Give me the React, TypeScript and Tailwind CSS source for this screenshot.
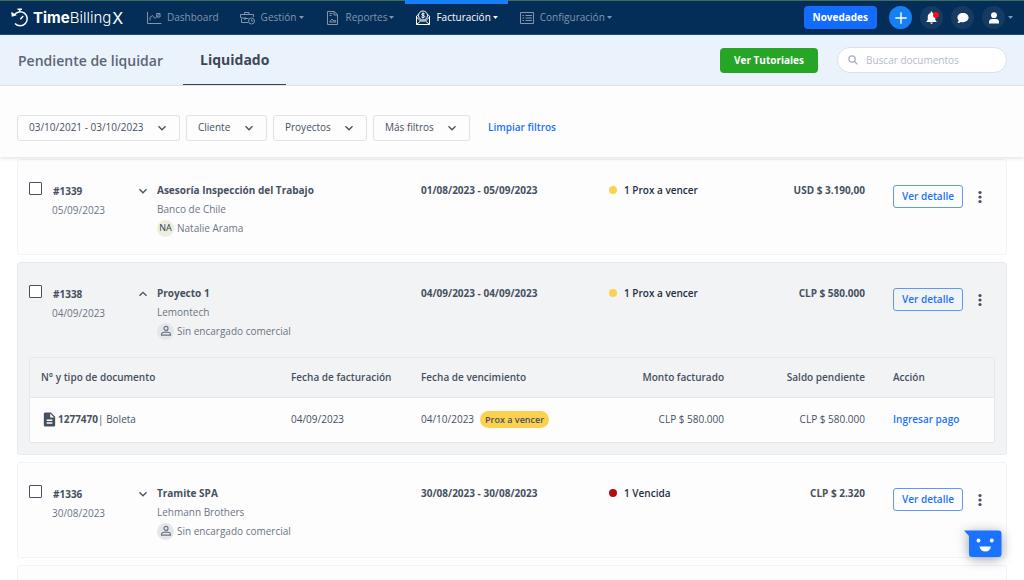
import type { ReactNode } from "react"
import clsx from "clsx"

type Doc = {
  number: string
  kind: string
  billed: string
  due: string
  status: string
  amount: string
  pending: string
}

type Settlement = {
  id: string
  date: string
  project: string
  client: string
  initials?: string
  manager?: string
  period: string
  status: string
  overdue?: boolean
  amount: string
  docs?: Doc[]
}

const settlements: Settlement[] = [
  {
    id: "#1339",
    date: "05/09/2023",
    project: "Asesoría Inspección del Trabajo",
    client: "Banco de Chile",
    initials: "NA",
    manager: "Natalie Arama",
    period: "01/08/2023 - 05/09/2023",
    status: "1 Prox a vencer",
    amount: "USD $ 3.190,00",
  },
  {
    id: "#1338",
    date: "04/09/2023",
    project: "Proyecto 1",
    client: "Lemontech",
    period: "04/09/2023 - 04/09/2023",
    status: "1 Prox a vencer",
    amount: "CLP $ 580.000",
    docs: [
      {
        number: "1277470",
        kind: "Boleta",
        billed: "04/09/2023",
        due: "04/10/2023",
        status: "Prox a vencer",
        amount: "CLP $ 580.000",
        pending: "CLP $ 580.000",
      },
    ],
  },
  {
    id: "#1336",
    date: "30/08/2023",
    project: "Tramite SPA",
    client: "Lehmann Brothers",
    period: "30/08/2023 - 30/08/2023",
    status: "1 Vencida",
    overdue: true,
    amount: "CLP $ 2.320",
  },
]

const filters = ["03/10/2021 - 03/10/2023", "Cliente", "Proyectos", "Más filtros"]

function Line({ children, className = "size-4" }: { children: ReactNode; className?: string }) {
  return (
    <svg viewBox="0 0 16 16" fill="none" stroke="currentColor" strokeWidth="1" className={clsx("shrink-0", className)} aria-hidden="true">
      {children}
    </svg>
  )
}

const navItems = [
  {
    label: "Dashboard",
    icon: (
      <Line>
        <path d="M1.500 2v11.500h14M4 10.500v-3l2.500-2 2.500 3 4.500-4.500M10.500 3.500h3.500V7h-3z" />
      </Line>
    ),
  },
  {
    label: "Gestión",
    menu: true,
    icon: (
      <Line>
        <path d="M8 12.500H1.500v-4M.5 4.500h13V7M.5 4.500v3l4 1h4M4.500 4.500v-2H9v2M5 7v3" />
        <circle cx="11.500" cy="11" r="3" />
        <path d="M11.500 9.500V11H13" />
      </Line>
    ),
  },
  {
    label: "Reportes",
    menu: true,
    icon: (
      <Line>
        <path d="M2.500 1.500H9l3.500 3v10h-10zM9 1.500V5h3.500M4.500 3.500h3M4.500 5.500h2M4.500 12l2.500-3 1.500 2L10 10l1 2z" />
      </Line>
    ),
  },
  {
    label: "Facturación",
    menu: true,
    active: true,
    icon: (
      <Line>
        <path d="M1.500 6v8.500h13V6M1.500 7l4 4h5l4-4M1.500 14.500l4-3.500M14.500 14.500l-4-3.500M1.500 6l2-1.500M14.500 6l-2-1.500" />
        <circle cx="8" cy="5.500" r="4.500" />
        <path d="M9.700 4c-.5-.6-3-.8-3 .5s3 .6 3 2-2.700 1.200-3.300.4M8 2.500v6" />
      </Line>
    ),
  },
  {
    label: "Configuración",
    menu: true,
    icon: (
      <Line>
        <path d="M1.500 2.500h13v11h-13zM6.500 5.500H13M6.500 8H13M6.500 10.500H13M3.500 5.500H5M3.500 8H5M3.500 10.500H5" />
      </Line>
    ),
  },
]

function Caret() {
  return (
    <svg viewBox="0 0 5 3" className="h-[3px] w-[5px] shrink-0 fill-current" aria-hidden="true">
      <path d="M0 0h5L2.500 3z" />
    </svg>
  )
}

function Chevron({ up, className }: { up?: boolean; className?: string }) {
  return (
    <svg viewBox="0 0 10 10" fill="none" stroke="currentColor" strokeWidth="1.300" className={clsx("size-2.5", className)} aria-hidden="true">
      <path d={up ? "M1.500 6.800 5 3.300l3.500 3.500" : "M1.500 3.300 5 6.800l3.500-3.500"} />
    </svg>
  )
}

function Logo() {
  return (
    <a href="#" className="flex w-[125px] shrink-0 items-center gap-1 text-white">
      <svg viewBox="0 0 18 20" fill="none" stroke="currentColor" strokeWidth="1.500" className="h-5 w-[18px]" aria-hidden="true">
        <path d="M3.200 7.200A7 7 0 1 1 4 15.500M6.500 1.200h4.500M8.800 1v2.500" />
        <path d="M9.300 11.200 12.200 8" />
        <path d="M.2 3.800.8 8.800l5-1.500z" fill="currentColor" stroke="none" />
      </svg>
      <span className="flex items-center font-['Inter',sans-serif] text-[15px] leading-5 font-light">
        <span className="font-bold">Time</span>Billing<span className="pl-px text-base font-normal">X</span>
      </span>
    </a>
  )
}

function Navbar() {
  return (
    <header className="flex h-[35px] shrink-0 items-stretch border-t border-b border-t-[#3f6d5b] border-b-[#254a71] bg-[#042e57] px-[11px]">
      <Logo />
      <nav className="flex items-stretch gap-px">
        {navItems.map((item) => (
          <a
            key={item.label}
            href="#"
            className={clsx("relative flex items-center px-2.5", item.active ? "text-white" : "text-[#8296ab]")}
          >
            {item.active && <span className="absolute inset-x-0 -top-px h-1 bg-[#1580f5]" />}
            {item.icon}
            <span className="pl-[5px]">{item.label}</span>
            {item.menu && (
              <span className="pl-0.5">
                <Caret />
              </span>
            )}
          </a>
        ))}
      </nav>
      <div className="ml-auto flex items-center gap-2">
        <button className="mr-1 h-[23px] rounded-sm bg-[#146bff] px-[9px] font-bold text-white">Novedades</button>
        <button aria-label="Agregar" className="grid size-[23px] place-items-center rounded-full bg-[#1580f5] text-white">
          <Line className="size-3.5">
            <path d="M8 1.500v13M1.500 8h13" strokeWidth="1.600" />
          </Line>
        </button>
        <button aria-label="Notificaciones" className="relative grid size-[23px] place-items-center rounded-full bg-[#153b62] text-white">
          <svg viewBox="0 0 24 24" className="size-[15px] fill-current" aria-hidden="true">
            <path d="M12 22c1.100 0 2-.9 2-2h-4c0 1.100.9 2 2 2zm6-6v-5c0-3.070-1.640-5.640-4.500-6.320V4c0-.83-.67-1.500-1.500-1.500s-1.500.67-1.500 1.500v.68C7.630 5.360 6 7.920 6 11v5l-2 2v1h16v-1l-2-2z" />
          </svg>
          <span className="absolute top-1.5 right-1 size-1.5 rounded-full bg-[#ff0a0f]" />
        </button>
        <button aria-label="Mensajes" className="grid size-[23px] place-items-center rounded-full bg-[#153b62] text-white">
          <svg viewBox="0 0 12 12" className="size-3 fill-current" aria-hidden="true">
            <path d="M6 1C2.800 1 .4 3 .4 5.600c0 1.200.5 2.200 1.300 3-.2.900-.7 1.700-1.300 2.400 1.300 0 2.500-.5 3.300-1.100.7.200 1.500.3 2.300.3 3.200 0 5.600-2 5.600-4.600S9.200 1 6 1z" />
          </svg>
        </button>
        <button aria-label="Cuenta" className="flex items-center gap-[3px] text-white">
          <span className="grid size-[23px] place-items-center rounded-full bg-[#153b62]">
            <svg viewBox="0 0 12 12" className="size-3 fill-current" aria-hidden="true">
              <circle cx="6" cy="3.200" r="2.900" />
              <path d="M1 11.500V10c0-1.800 1.300-3 3-3h4c1.700 0 3 1.200 3 3v1.500z" />
            </svg>
          </span>
          <span className="text-[#8296ab]">
            <Caret />
          </span>
        </button>
      </div>
    </header>
  )
}

function Tabs() {
  return (
    <div className="flex h-[51px] shrink-0 items-stretch border-b border-[#e2ecf5] bg-[#eaf3fc] px-[17px]">
      <nav className="flex items-stretch gap-5 text-sm">
        <a href="#" className="flex items-center pt-px pl-px font-semibold text-[#5b6575]">
          Pendiente de liquidar
        </a>
        <a href="#" aria-current="page" className="flex items-center border-b border-[#3d4756] px-[17px] font-bold text-[#3d4756]">
          Liquidado
        </a>
      </nav>
      <div className="ml-auto flex items-center gap-[19px]">
        <button className="h-[25px] rounded-sm bg-[#26a526] px-3.5 font-bold text-white">Ver Tutoriales</button>
        <label className="flex h-[26px] w-[170px] items-center gap-2 rounded-full border border-[#dbe2ea] bg-white px-2.5 text-[#a3acb9]">
          <Line className="size-2.5">
            <circle cx="6.500" cy="6.500" r="5" strokeWidth="2" />
            <path d="m10.500 10.500 4.500 4.500" strokeWidth="2" />
          </Line>
          <input
            type="search"
            aria-label="Buscar documentos"
            placeholder="Buscar documentos"
            className="w-full min-w-0 bg-transparent outline-none placeholder:text-[#b4bcc7]"
          />
        </label>
      </div>
    </div>
  )
}

function Filters() {
  return (
    <div className="relative z-10 flex h-[71px] shrink-0 items-center gap-1.5 bg-[#fdfdfe] px-[17px] pt-3 shadow-[0_1px_4px_rgba(30,41,59,0.16)]">
      {filters.map((label) => (
        <div key={label} className="relative">
          <select
            aria-label={label}
            className="h-[26px] appearance-none rounded-[3px] border border-[#dfe1e4] bg-[#fdfdfe] pr-[35px] pl-[11px] text-[#465060]"
          >
            <option>{label}</option>
          </select>
          <Chevron className="pointer-events-none absolute top-2 right-[13px] text-[#465060]" />
        </div>
      ))}
      <a href="#" className="pl-3 font-semibold text-[#1a72ff]">
        Limpiar filtros
      </a>
    </div>
  )
}

function Manager({ initials, name }: { initials?: string; name?: string }) {
  return (
    <div className="flex h-5 items-center gap-[3px]">
      <span
        className={clsx(
          "grid size-[17px] place-items-center rounded-full text-[9px]",
          initials ? "bg-[#eeeedd] text-[#2c3a50]" : "bg-[#e4e6e9] text-[#6b7482]"
        )}
      >
        {initials ?? (
          <Line className="size-3">
            <circle cx="8" cy="4.500" r="2.700" strokeWidth="1.500" />
            <path d="M2 13.500v-1.300c0-1.500 2.500-2.700 6-2.700s6 1.200 6 2.700v1.300z" strokeWidth="1.500" />
          </Line>
        )}
      </span>
      <span>{name ?? "Sin encargado comercial"}</span>
    </div>
  )
}

function DocsTable({ docs }: { docs: Doc[] }) {
  return (
    <div className="mx-[11px] mb-[11px] overflow-hidden rounded-[3px] border border-[#e5e7eb]">
      <table className="w-full table-fixed text-left text-[#465060]">
        <thead>
          <tr className="h-[39px] border-b border-[#e5e7eb]">
            <th className="w-[261px] pl-[11px] font-semibold">N° y tipo de documento</th>
            <th className="w-[130px] font-semibold">Fecha de facturación</th>
            <th className="w-[188px] font-semibold">Fecha de vencimiento</th>
            <th className="w-[115px] text-right font-semibold">Monto facturado</th>
            <th className="w-[141px] text-right font-semibold">Saldo pendiente</th>
            <th className="w-[129px] pl-7 font-semibold">Acción</th>
          </tr>
        </thead>
        <tbody>
          {docs.map((doc) => (
            <tr key={doc.number} className="h-[45px] bg-[#fdfdfe]">
              <td className="pl-[11px]">
                <span className="flex items-center">
                  <svg viewBox="0 0 24 24" className="size-[17px] fill-current" aria-hidden="true">
                    <path d="M14 2H6c-1.100 0-1.990.9-1.990 2L4 20c0 1.100.89 2 1.990 2H18c1.100 0 2-.9 2-2V8l-6-6zm2 16H8v-2h8v2zm0-4H8v-2h8v2zm-3-5V3.500L18.500 9H13z" />
                  </svg>
                  <b>{doc.number}</b>| {doc.kind}
                </span>
              </td>
              <td>{doc.billed}</td>
              <td>
                <span className="flex items-center gap-1.5">
                  {doc.due}
                  <span className="h-[17px] rounded-full bg-[#fdd04f] px-[5px] text-[9px] leading-[17px] font-semibold">{doc.status}</span>
                </span>
              </td>
              <td className="text-right">{doc.amount}</td>
              <td className="text-right">{doc.pending}</td>
              <td className="pl-7">
                <a href="#" className="font-semibold text-[#1a72ff]">
                  Ingresar pago
                </a>
              </td>
            </tr>
          ))}
        </tbody>
      </table>
    </div>
  )
}

function SettlementCard({ item }: { item: Settlement }) {
  const open = Boolean(item.docs)
  return (
    <article className={clsx("rounded-[3px] border", open ? "border-[#e8eaed] bg-[#f2f3f5]" : "border-[#eff4f9] bg-[#fdfdfe]")}>
      <div className="grid grid-cols-[128px_264fr_188fr_116fr_140fr_130px] px-[11px] pt-5 pb-4 text-[#6b7482]">
        <div className="flex items-start">
          <input
            type="checkbox"
            aria-label={`Seleccionar ${item.id}`}
            className="mt-0.5 size-[13px] appearance-none rounded-[1px] border border-[#465060] bg-white"
          />
          <div className="ml-2.5">
            <div className="pl-px leading-[22px] font-bold text-[#465060]">{item.id}</div>
            <div className="leading-4">{item.date}</div>
          </div>
          <button aria-label="Desplegar" aria-expanded={open} className="mt-1.5 mr-[9px] ml-auto text-[#465060]">
            <Chevron up={open} />
          </button>
        </div>
        <div>
          <h2 className="leading-5 font-bold text-[#465060]">{item.project}</h2>
          <p className="leading-[18px]">{item.client}</p>
          <Manager initials={item.initials} name={item.manager} />
        </div>
        <div className="leading-5 font-bold text-[#465060]">{item.period}</div>
        <div className="flex h-5 items-center gap-[7px] font-semibold whitespace-nowrap text-[#1f2d42]">
          <span className={clsx("size-2 rounded-full", item.overdue ? "bg-[#b00d10]" : "bg-[#fdd04f]")} />
          {item.status}
        </div>
        <div className="text-right leading-5 font-bold text-[#465060]">{item.amount}</div>
        <div className="mt-[5px] flex h-[23px] items-center pl-7">
          <button className="h-full rounded-[3px] border border-[#5a98fb] px-2 font-semibold whitespace-nowrap text-[#1a72ff]">
            Ver detalle
          </button>
          <button aria-label="Más acciones" className="ml-3.5 text-[#465060]">
            <svg viewBox="0 0 6 14" className="h-3.5 w-1.5 fill-current" aria-hidden="true">
              <circle cx="3" cy="2.500" r="1.600" />
              <circle cx="3" cy="7" r="1.600" />
              <circle cx="3" cy="11.500" r="1.600" />
            </svg>
          </button>
        </div>
      </div>
      {item.docs && <DocsTable docs={item.docs} />}
    </article>
  )
}

function ChatLauncher() {
  return (
    <button aria-label="Chat" className="fixed right-[22px] bottom-[22px] z-20 drop-shadow-[0_2px_6px_rgba(30,41,59,0.45)]">
      <svg viewBox="0 0 38 28" className="h-7 w-[38px]" aria-hidden="true">
        <path d="M0 .5h34.500a3 3 0 0 1 3 3V24a3 3 0 0 1-3 3H8a3 3 0 0 1-3-3V6z" fill="#1a72ff" />
        <circle cx="14.500" cy="10.500" r="1.900" fill="#fff" />
        <circle cx="27.800" cy="10.500" r="1.900" fill="#fff" />
        <path d="M15.500 16.500H27c-.5 3-2.600 5-5.700 5s-5.300-2-5.800-5z" fill="#fff" />
      </svg>
    </button>
  )
}

export default function App() {
  return (
    <div className="flex h-screen flex-col overflow-hidden bg-white font-['Open_Sans',sans-serif] text-[10px]">
      <Navbar />
      <Tabs />
      <Filters />
      <main className="flex flex-1 flex-col gap-[7px] overflow-hidden px-[17px] pt-0.5 *:shrink-0">
        {settlements.map((item) => (
          <SettlementCard key={item.id} item={item} />
        ))}
        <article className="h-24 rounded-[3px] border border-[#eff4f9] bg-[#fdfdfe]" />
      </main>
      <ChatLauncher />
    </div>
  )
}
